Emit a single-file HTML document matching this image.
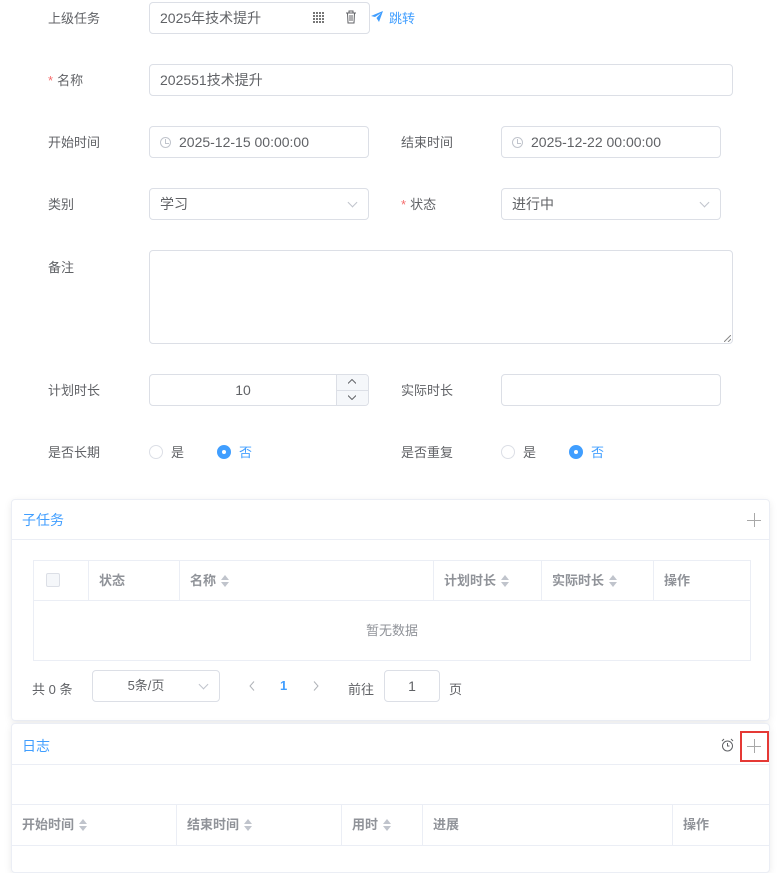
<!DOCTYPE html>
<html><head><meta charset="utf-8"><style>
*{box-sizing:border-box;margin:0;padding:0}
body{width:780px;height:860px;background:#fff;font-family:"Liberation Sans","Noto Sans CJK SC",sans-serif;font-size:13px;color:#606266;position:relative;overflow:hidden}
.a{position:absolute}
.lbl{position:absolute;font-size:13px;color:#606266;line-height:20px;margin-top:2px}
.req{color:#f56c6c;margin-right:4px}
.inp{position:absolute;border:1px solid #dcdfe6;border-radius:4px;height:32px;background:#fff;font-size:14px;color:#606266;line-height:30px;padding-left:10px}
.clk{display:inline-block;width:11px;height:11px;border:1px solid #c0c4cc;border-radius:50%;vertical-align:-1px;margin-right:8px;position:relative}
.clk:after{content:"";position:absolute;left:4px;top:1px;width:3px;height:4px;border-left:1px solid #c0c4cc;border-bottom:1px solid #c0c4cc}
.chev{position:absolute;right:12px;top:10px;width:7px;height:7px;border-right:1px solid #c0c4cc;border-bottom:1px solid #c0c4cc;transform:rotate(45deg)}
.radio{position:absolute;width:14px;height:14px;border:1px solid #dcdfe6;border-radius:50%}
.radio.on{background:#409eff;border-color:#409eff}
.radio.on:after{content:"";position:absolute;left:4px;top:4px;width:4px;height:4px;border-radius:50%;background:#fff}
.card{position:absolute;left:11px;width:759px;border:1px solid #ebeef5;border-radius:4px;box-shadow:0 2px 8px rgba(0,0,0,.08);background:#fff}
.th{position:absolute;top:0;height:100%;font-weight:bold;color:#909399;font-size:13px;line-height:40px;border-right:1px solid #ebeef5;padding-left:10px}
.sort{display:inline-block;vertical-align:-2px;margin-left:5px;width:8px;height:12px;position:relative}
.sort:before{content:"";position:absolute;left:0;top:0;border:4px solid transparent;border-bottom:5px solid #c0c4cc;border-top:0}
.sort:after{content:"";position:absolute;left:0;bottom:0;border:4px solid transparent;border-top:5px solid #c0c4cc;border-bottom:0}
.plus{position:absolute;width:14px;height:14px}
.plus:before{content:"";position:absolute;left:6.5px;top:0;width:1.3px;height:14px;background:#a8a8a8}
.plus:after{content:"";position:absolute;left:0;top:6.5px;width:14px;height:1.3px;background:#a8a8a8}
</style></head><body>

<div class="lbl" style="left:48px;top:7px">上级任务</div>
<div class="inp" style="left:149px;top:2px;width:221px">2025年技术提升</div>
<div class="a" style="left:313px;top:12px;width:11px;height:11px;background:repeating-linear-gradient(90deg,#777 0 2px,transparent 2px 3px),#fff"></div>
<div class="a" style="left:313px;top:12px;width:11px;height:11px;background:repeating-linear-gradient(0deg,transparent 0 2px,#fff 2px 3px)"></div>
<svg class="a" style="left:345px;top:10px" width="12" height="14" viewBox="0 0 12 14"><path d="M1 3h10M4 3V1h4v2M2.5 3l.5 10h6l.5-10M5 5v6M7 5v6" stroke="#606266" fill="none" stroke-width="1"/></svg>
<svg class="a" style="left:371px;top:11px" width="12" height="12" viewBox="0 0 12 12"><path d="M0 5L12 0 8 11 5.5 7 10 2 4 6z" fill="#409eff"/></svg>
<div class="a" style="left:389px;top:8px;color:#409eff;font-size:13px">跳转</div>

<div class="lbl" style="left:48px;top:69px"><span class="req">*</span>名称</div>
<div class="inp" style="left:149px;top:64px;width:584px">202551技术提升</div>

<div class="lbl" style="left:48px;top:131px">开始时间</div>
<div class="inp" style="left:149px;top:126px;width:220px"><span class="clk"></span>2025-12-15 00:00:00</div>
<div class="lbl" style="left:401px;top:131px">结束时间</div>
<div class="inp" style="left:501px;top:126px;width:220px"><span class="clk"></span>2025-12-22 00:00:00</div>

<div class="lbl" style="left:48px;top:193px">类别</div>
<div class="inp" style="left:149px;top:188px;width:220px">学习<span class="chev"></span></div>
<div class="lbl" style="left:401px;top:193px"><span class="req">*</span>状态</div>
<div class="inp" style="left:501px;top:188px;width:220px">进行中<span class="chev"></span></div>

<div class="lbl" style="left:48px;top:256px">备注</div>
<div class="inp" style="left:149px;top:250px;width:584px;height:94px"></div>
<svg class="a" style="left:724px;top:335px" width="7" height="7"><path d="M0 7L7 0M4 7L7 4" stroke="#888"/></svg>

<div class="lbl" style="left:48px;top:379px">计划时长</div>
<div class="inp" style="left:149px;top:374px;width:220px;text-align:center;padding:0 32px 0 0">10</div>
<div class="a" style="left:336px;top:375px;width:32px;height:30px;background:#f5f7fa;border-left:1px solid #dcdfe6;border-radius:0 4px 4px 0"></div>
<div class="a" style="left:336px;top:390px;width:32px;height:1px;background:#dcdfe6"></div>
<svg class="a" style="left:348px;top:379px" width="8" height="5"><path d="M0 4.5L4 .5 8 4.5" stroke="#606266" fill="none"/></svg>
<svg class="a" style="left:348px;top:395px" width="8" height="5"><path d="M0 .5L4 4.5 8 .5" stroke="#606266" fill="none"/></svg>
<div class="lbl" style="left:401px;top:379px">实际时长</div>
<div class="inp" style="left:501px;top:374px;width:220px"></div>

<div class="lbl" style="left:48px;top:441px">是否长期</div>
<div class="radio" style="left:149px;top:445px"></div><div class="lbl" style="left:171px;top:441px">是</div>
<div class="radio on" style="left:217px;top:445px"></div><div class="lbl" style="left:239px;top:441px;color:#409eff">否</div>
<div class="lbl" style="left:401px;top:441px">是否重复</div>
<div class="radio" style="left:501px;top:445px"></div><div class="lbl" style="left:523px;top:441px">是</div>
<div class="radio on" style="left:569px;top:445px"></div><div class="lbl" style="left:591px;top:441px;color:#409eff">否</div>

<div class="card" style="top:499px;height:222px">
  <div class="a" style="left:10px;top:10px;color:#409eff;font-size:14px">子任务</div>
  <div class="plus" style="left:735px;top:13px"></div>
  <div class="a" style="left:0;top:39px;width:757px;height:1px;background:#ebeef5"></div>
  <div class="a" style="left:21px;top:60px;width:718px;height:101px;border:1px solid #ebeef5">
    <div class="a" style="left:0;top:0;width:716px;height:40px;border-bottom:1px solid #ebeef5">
      <div class="th" style="left:0;width:55px"><span class="a" style="left:12px;top:12px;width:14px;height:14px;border:1px solid #dcdfe6;border-radius:2px;background:#f5f7fa"></span></div>
      <div class="th" style="left:55px;width:91px">状态</div>
      <div class="th" style="left:146px;width:254px">名称<span class="sort"></span></div>
      <div class="th" style="left:400px;width:108px">计划时长<span class="sort"></span></div>
      <div class="th" style="left:508px;width:112px">实际时长<span class="sort"></span></div>
      <div class="th" style="left:620px;width:96px;border:0">操作</div>
    </div>
    <div class="a" style="left:0;top:40px;width:716px;line-height:60px;text-align:center;color:#909399">暂无数据</div>
  </div>
  <div class="a" style="left:20px;top:179px;font-size:13px">共 0 条</div>
  <div class="inp" style="left:80px;top:170px;width:128px;text-align:center;padding:0 20px 0 0;font-size:13px">5条/页<span class="chev"></span></div>
  <svg class="a" style="left:237px;top:181px" width="6" height="10"><path d="M5 .5L1 5 5 9.5" stroke="#b0b3b8" fill="none"/></svg>
  <div class="a" style="left:268px;top:178px;color:#409eff;font-weight:bold">1</div>
  <svg class="a" style="left:301px;top:181px" width="6" height="10"><path d="M1 .5L5 5 1 9.5" stroke="#b0b3b8" fill="none"/></svg>
  <div class="a" style="left:336px;top:179px">前往</div>
  <div class="inp" style="left:372px;top:170px;width:56px;text-align:center;padding:0">1</div>
  <div class="a" style="left:437px;top:179px">页</div>
</div>

<div class="card" style="top:723px;height:150px">
  <div class="a" style="left:10px;top:12px;color:#409eff;font-size:14px">日志</div>
  <svg class="a" style="left:709px;top:14px" width="13" height="14" viewBox="0 0 13 14"><circle cx="6.5" cy="8" r="5" stroke="#606266" fill="none"/><path d="M6.5 5v3h2M1 3l2-2M12 3l-2-2" stroke="#606266" fill="none"/></svg>
  <div class="a" style="left:728px;top:7px;width:29px;height:31px;border:2px solid #e53935"></div>
  <div class="plus" style="left:735px;top:15px"></div>
  <div class="a" style="left:0;top:40px;width:757px;height:1px;background:#ebeef5"></div>
  <div class="a" style="left:0;top:80px;width:757px;height:1px;background:#ebeef5"></div>
  <div class="a" style="left:0;top:81px;width:757px;height:41px;border-bottom:1px solid #ebeef5">
    <div class="th" style="left:0;width:165px">开始时间<span class="sort"></span></div>
    <div class="th" style="left:165px;width:165px">结束时间<span class="sort"></span></div>
    <div class="th" style="left:330px;width:81px">用时<span class="sort"></span></div>
    <div class="th" style="left:411px;width:250px">进展</div>
    <div class="th" style="left:661px;width:96px;border:0">操作</div>
  </div>
</div>
</body></html>
